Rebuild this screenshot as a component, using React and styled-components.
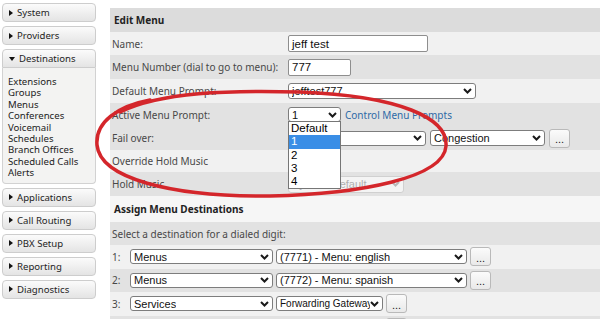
import React from 'react'
import styled, { createGlobalStyle, css } from 'styled-components'

const GlobalStyle = createGlobalStyle`
  html, body {
    margin: 0;
    padding: 0;
    background: #ffffff;
    overflow: hidden;
  }
  body {
    font-family: "Noto Sans", "Open Sans", sans-serif;
  }
`

// -------
// Sidebar

const navTop = ['System', 'Providers']
const navBottom = ['Applications', 'Call Routing', 'PBX Setup', 'Reporting', 'Diagnostics']
const destLinks = [
  'Extensions', 'Groups', 'Menus', 'Conferences', 'Voicemail',
  'Schedules', 'Branch Offices', 'Scheduled Calls', 'Alerts',
]

const Sidebar = () => {
  return (
    <StyledSidebar>
      {navTop.map((n) => (
        <NavButton key={n}><Arrow />{n}</NavButton>
      ))}
      <NavButton $open><Arrow $open />Destinations</NavButton>
      <SubPanel>
        {destLinks.map((l) => <SubLink key={l}>{l}</SubLink>)}
      </SubPanel>
      {navBottom.map((n) => (
        <NavButton key={n}><Arrow />{n}</NavButton>
      ))}
    </StyledSidebar>
  )
}

const StyledSidebar = styled.div`
  width: 94px;
  flex-shrink: 0;
  padding: 3px 0 0 2px;
  display: flex;
  flex-direction: column;
  & > * { flex-shrink: 0; }
`

const NavButton = styled.div`
  height: 19px;
  box-sizing: border-box;
  margin-bottom: 4px;
  display: flex;
  align-items: center;
  padding-left: 6px;
  font-size: 9.6px;
  color: #1e1e1e;
  border: 1px solid #cdcdcd;
  border-radius: 4px;
  background: linear-gradient(#fbfbfb, #e4e4e4);
  ${(p) => p.$open && css`
    margin-bottom: 0;
    border-radius: 4px 4px 0 0;
  `}
`

const Arrow = styled.span`
  display: inline-block;
  width: 0;
  height: 0;
  margin-right: 4px;
  ${(p) => p.$open
    ? css`
      border-left: 3px solid transparent;
      border-right: 3px solid transparent;
      border-top: 4px solid #111;
    `
    : css`
      border-top: 3px solid transparent;
      border-bottom: 3px solid transparent;
      border-left: 4px solid #111;
    `}
`

const SubPanel = styled.div`
  box-sizing: border-box;
  border: 1px solid #d2d2d2;
  border-top: none;
  border-radius: 0 0 4px 4px;
  background: #f3f3f2;
  padding: 8px 0 4px 5px;
  margin-bottom: 4px;
  display: flex;
  flex-direction: column;
`

const SubLink = styled.div`
  font-size: 9.6px;
  line-height: 11.4px;
  height: 11.4px;
  color: #222;
`

// ----------
// Form parts

const Chevron = ({ color = '#1a1a1a' }) => (
  <svg width="9" height="6" viewBox="0 0 9 6" style={{ flexShrink: 0 }}>
    <polyline points="1,1 4.5,4.5 8,1" fill="none" stroke={color} strokeWidth="2" />
  </svg>
)

const Select = ({ width, height = 15, disabled, children, list, fontSize }) => (
  <SelectBox $w={width} $h={height} $disabled={disabled} $fs={fontSize}>
    <span>{children}</span>
    <Chevron color={disabled ? '#b8b8b8' : '#1a1a1a'} />
    {list}
  </SelectBox>
)

const SelectBox = styled.div`
  position: relative;
  width: ${(p) => p.$w}px;
  height: ${(p) => p.$h}px;
  box-sizing: border-box;
  flex-shrink: 0;
  display: flex;
  align-items: center;
  justify-content: space-between;
  padding: 0 3px 0 3px;
  border: 1px solid ${(p) => (p.$disabled ? '#d0d0d0' : '#7d7d7d')};
  border-radius: 3px;
  background: ${(p) => (p.$disabled ? '#f4f4f4' : '#ffffff')};
  color: ${(p) => (p.$disabled ? '#b0b0b0' : '#111')};
  font-family: "Liberation Sans", Arial, sans-serif;
  font-size: ${(p) => p.$fs || 11}px;
  white-space: nowrap;
  span { overflow: hidden; }
`

const Input = styled.div`
  width: ${(p) => p.$w}px;
  height: 17px;
  box-sizing: border-box;
  display: flex;
  align-items: center;
  padding-left: 3px;
  border: 1px solid #8e8e8e;
  border-radius: 2px;
  background: #fff;
  font-family: "Liberation Sans", Arial, sans-serif;
  font-size: 11.5px;
  color: #111;
`

const DotsButton = styled.div`
  width: 21px;
  height: 19px;
  box-sizing: border-box;
  flex-shrink: 0;
  display: flex;
  align-items: center;
  justify-content: center;
  padding-top: 2px;
  border: 1px solid #b9b9b9;
  border-radius: 3px;
  background: linear-gradient(#fbfbfb, #e9e9e9);
  font-family: "Liberation Sans", Arial, sans-serif;
  font-size: 11px;
  color: #222;
`

const DropList = styled.div`
  position: absolute;
  top: 100%;
  left: -1px;
  width: 53px;
  box-sizing: border-box;
  border: 1px solid #767676;
  background: #fff;
  z-index: 2;
`

const DropItem = styled.div`
  height: 13.3px;
  line-height: 13.3px;
  padding-left: 2px;
  font-size: 11.5px;
  color: ${(p) => (p.$active ? '#fff' : '#000')};
  background: ${(p) => (p.$active ? '#3a8ee6' : '#fff')};
`

// ----
// Rows

const tones = {
  head: '#dcdcdc',
  light: '#f1f1f1',
  dark: '#e2e2e2',
  white: '#f6f6f6',
}

const Row = styled.div`
  display: flex;
  flex-shrink: 0;
  align-items: center;
  gap: ${(p) => p.$gap || 4}px;
  height: ${(p) => p.$h || 24}px;
  padding-left: 2px;
  background: ${(p) => tones[p.$tone || 'light']};
`

const Label = styled.div`
  width: 176px;
  flex-shrink: 0;
  font-size: 10px;
  color: #484848;
  margin-right: -4px;
`

const Heading = styled.div`
  font-size: 10px;
  font-weight: bold;
  color: #222;
  padding-left: 2px;
`

const Text = styled.div`
  font-size: 10px;
  color: #484848;
`

const Digit = styled.div`
  width: 15px;
  flex-shrink: 0;
  font-size: 10px;
  color: #484848;
`

const Link = styled.a`
  font-size: 10px;
  color: #2e6aa6;
  text-decoration: none;
`

const Main = styled.div`
  flex: 1;
  margin: 8px 0 0 14px;
  display: flex;
  flex-direction: column;
`

const Page = styled.div`
  position: relative;
  display: flex;
  width: 600px;
  height: 319px;
  overflow: hidden;
`

const Scribble = styled.svg`
  position: absolute;
  left: 0;
  top: 0;
  pointer-events: none;
  z-index: 5;
`

const destinations = [
  { n: 1, type: 'Menus', target: '(7771) - Menu: english', w: 191, tone: 'light' },
  { n: 2, type: 'Menus', target: '(7772) - Menu: spanish', w: 191, tone: 'dark' },
  { n: 3, type: 'Services', target: 'Forwarding Gateway', w: 107, fs: 10, tone: 'light' },
  { n: 4, type: 'Services', target: 'Forwarding Gateway', w: 107, fs: 10, tone: 'dark' },
]

export default function App() {
  return (
    <Page>
      <GlobalStyle />
      <Sidebar />
      <Main>
        <Row $tone="head" $h={24}><Heading>Edit Menu</Heading></Row>
        <Row $tone="light" $h={23}>
          <Label>Name:</Label>
          <Input $w={140}>jeff test</Input>
        </Row>
        <Row $tone="dark" $h={24}>
          <Label>Menu Number (dial to go to menu):</Label>
          <Input $w={63}>777</Input>
        </Row>
        <Row $tone="light" $h={24}>
          <Label>Default Menu Prompt:</Label>
          <Select width={188} height={16}>jefftest777</Select>
        </Row>
        <Row $tone="dark" $h={23}>
          <Label>Active Menu Prompt:</Label>
          <Select
            width={53}
            height={15}
            list={(
              <DropList>
                <DropItem>Default</DropItem>
                <DropItem $active>1</DropItem>
                <DropItem>2</DropItem>
                <DropItem>3</DropItem>
                <DropItem>4</DropItem>
              </DropList>
            )}
          >
            1
          </Select>
          <Link>Control Menu Prompts</Link>
        </Row>
        <Row $tone="dark" $h={24}>
          <Label>Fail over:</Label>
          <Select width={138} height={15} />
          <Select width={115} height={16}>Congestion</Select>
          <DotsButton>...</DotsButton>
        </Row>
        <Row $tone="light" $h={22}>
          <Label>Override Hold Music</Label>
        </Row>
        <Row $tone="dark" $h={24}>
          <Label>Hold Music</Label>
          <Select width={116} height={17} disabled>System Default</Select>
        </Row>
        <Row $tone="white" $h={26}><Heading>Assign Menu Destinations</Heading></Row>
        <Row $tone="dark" $h={23}><Text>Select a destination for a dialed digit:</Text></Row>
        {destinations.map((d) => (
          <Row key={d.n} $tone={d.tone} $h={23.5} $gap={3}>
            <Digit>{d.n}:</Digit>
            <Select width={143} height={15}>{d.type}</Select>
            <Select width={d.w} height={15} fontSize={d.fs}>{d.target}</Select>
            <DotsButton>...</DotsButton>
          </Row>
        ))}
      </Main>
      <Scribble width="600" height="319" viewBox="0 0 600 319">
        <path
          d="M 120 112 C 160 92, 230 90, 300 92 C 400 96, 448 118, 446 146 C 444 178, 360 194, 270 196 C 170 197, 100 178, 97 145 C 95 122, 118 106, 150 100"
          fill="none"
          stroke="#d4262b"
          strokeWidth="3.5"
          strokeLinecap="round"
        />
      </Scribble>
    </Page>
  )
}
